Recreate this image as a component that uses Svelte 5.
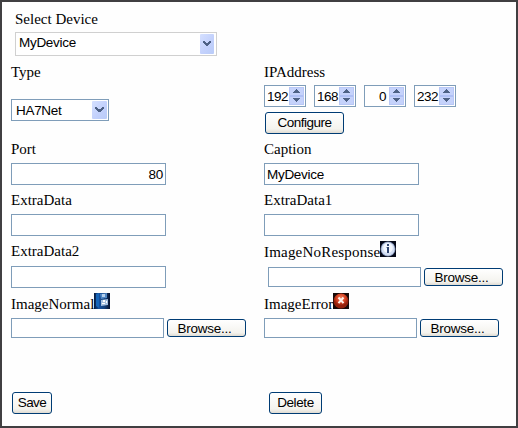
<script>
  let ip = $state(['192', '168', '0', '232']);
</script>

{#snippet arrow()}
  <span class="drop"><svg width="14" height="100%" viewBox="0 0 14 18" preserveAspectRatio="none"><defs><linearGradient id="dg" x2="1" y2="1"><stop stop-color="#d5e0ff"/><stop offset=".55" stop-color="#c3d1fc"/><stop offset="1" stop-color="#b9cbf8"/></linearGradient></defs><rect width="14" height="18" rx="1" fill="url(#dg)"/><path d="M3 6h2v1h1v1h2V7h1V6h2v2h-1v1H9v1H8v1H6v-1H5V9H4V8H3z" fill="#4d6185" shape-rendering="crispEdges"/></svg></span>
{/snippet}

{#snippet file(shift)}
  <div class="file" class:shift><div class="box"></div><button>Browse...</button></div>
{/snippet}

<main>
  <section class="device">
    <div class="label">Select Device</div>
    <div class="select wide"><span>MyDevice</span>{@render arrow()}</div>
  </section>
  <div class="columns">
    <section class="left">
      <div class="label type">Type</div>
      <div class="select"><span>HA7Net</span>{@render arrow()}</div>
      <div class="label port">Port</div>
      <div class="input number">80</div>
      <div class="label">ExtraData</div>
      <div class="input"></div>
      <div class="label">ExtraData2</div>
      <div class="input extra"></div>
      <div class="label pic normal"><span>ImageNormal</span><svg width="16" height="16" viewBox="0 0 16 16"><defs><linearGradient id="ng"><stop stop-color="#071a3b"/><stop offset=".3" stop-color="#1551a0"/><stop offset=".65" stop-color="#12417e"/><stop offset="1" stop-color="#06112d"/></linearGradient></defs><rect width="16" height="16" fill="url(#ng)"/><path d="M2 1l3-1v15l-3-2z" fill="#1765b7"/><path d="M6 1l7-1v5l-6 1z" fill="#5288c4"/><path d="M8 1h3v3H8z" fill="#b5d0ee"/><path d="M7 7l7-1v6l-7 1z" fill="#a3bfdf"/><path d="M9 7h2v2H9zm3 1h1v2h-1zM8 10h3v1H8z" fill="#fff"/><path d="M6 6h2v1H6zm4-1h2v1h-2z" fill="#234e86"/></svg></div>
      {@render file(false)}
      <button class="save">Save</button>
    </section>
    <section class="right">
      <div class="label type">IPAddress</div>
      <div class="ips">
        {#each ip as part}
          <div class="spin"><span>{part}</span><svg width="15" height="18" viewBox="0 0 15 18" shape-rendering="crispEdges"><path d="M0 0h15v18H0z" fill="#c5d2fb"/><path d="M0 8h15v2H0z" fill="#afc0f5"/><path d="M.5.5h14v17H.5z" fill="none" stroke="#b8c7f6"/><path d="M7 2h1v1h1v1h1v1h1v1H4V5h1V4h1V3h1zM4 11h7v1h-1v1H9v1H8v1H7v-1H6v-1H5v-1H4z" fill="#4d6185"/></svg></div>
        {/each}
      </div>
      <button class="configure">Configure</button>
      <div class="label caption">Caption</div>
      <div class="input">MyDevice</div>
      <div class="label">ExtraData1</div>
      <div class="input"></div>
      <div class="label pic response"><span>ImageNoResponse</span><svg width="16" height="16" viewBox="0 0 16 16"><rect width="16" height="16" fill="#050817"/><circle cx="8" cy="8" r="7.5" fill="#7889ad"/><circle cx="8" cy="8" r="6.7" fill="#d3def3"/><circle cx="8" cy="7" r="4.8" fill="#f3f7ff"/><path d="M7 3h2v2H7zM6.6 6H9v6H7V7h-.4z" fill="#304571"/></svg></div>
      {@render file(true)}
      <div class="label pic error"><span>ImageError</span><svg width="16" height="16" viewBox="0 0 16 16"><defs><radialGradient id="eg" cy=".3"><stop stop-color="#ef8060"/><stop offset=".6" stop-color="#d54222"/><stop offset="1" stop-color="#94200b"/></radialGradient></defs><rect width="16" height="16" fill="#170908"/><circle cx="8" cy="8" r="7.5" fill="url(#eg)"/><path d="M5.5 4.5l5 5.6M10.5 4.5l-5 5.6" stroke="#fff0e9" stroke-width="2.1"/></svg></div>
      {@render file(false)}
      <button class="delete">Delete</button>
    </section>
  </div>
</main>

<style>
  main { box-sizing: border-box; width: 518px; height: 428px; border: 2px solid #403f41; background: #fefefe; color: #000; overflow: hidden; font: 13.5px/18px "Liberation Sans", Arial, sans-serif; letter-spacing: -.3px; }
  section { display: flex; flex-direction: column; align-items: flex-start; }
  .device { height: 62px; padding: 8px 0 0 13px; box-sizing: border-box; }
  .label { height: 22px; font: 15px/16px "Liberation Serif", "Times New Roman", serif; letter-spacing: 0; white-space: nowrap; }
  .device .label { line-height: 18px; }
  .columns { display: flex; padding-left: 9px; }
  .left { width: 253px; }
  .right { width: 245px; }
  .select, .input, .box, .spin, button { box-sizing: border-box; border: 1px solid #7f9db9; background: #fff; }
  .select { width: 98px; height: 22px; display: flex; justify-content: space-between; padding: 1px 1px 1px 4px; line-height: 20px; }
  .wide { width: 202px; height: 24px; border-color: #d0d0d0; padding-left: 3px; line-height: 18px; }
  .drop { display: block; width: 15px; }
  .drop svg { display: block; width: 14px; height: 100%; }
  .select:not(.wide) .drop svg { width: 15px; }
  .type { height: 21px; }
  .left .type { height: 35px; }
  .input { width: 155px; height: 22px; padding: 1px 2px; line-height: 20px; margin-bottom: 7px; }
  .number { text-align: right; }
  .port { margin-top: 20px; }
  .caption { margin-top: 7px; }
  .extra { margin-top: 1px; margin-bottom: 5px; }
  .ips { display: flex; gap: 8px; height: 27px; letter-spacing: -.5px; }
  .spin { width: 42px; height: 22px; display: flex; align-items: center; justify-content: flex-end; padding-right: 1px; gap: 1px; }
  .spin span { line-height: 16px; padding-top: 2px; }
  .spin:nth-child(3) { gap: 3px; }
  button { height: 22px; padding: 0; border-color: #003c74; border-radius: 3px; background: linear-gradient(#fff, #f4f3ee 80%, #dfdbd2); color: #000; font: 13.5px/18px "Liberation Sans", Arial, sans-serif; letter-spacing: -.38px; text-align: center; }
  .configure { width: 79px; margin-left: 1px; letter-spacing: -.5px; }
  .file { display: flex; gap: 3px; align-items: center; height: 20px; }
  .box { width: 153px; height: 20px; }
  .file button { width: 79px; height: 18px; padding: 0 4px 0 0; line-height: 15px; letter-spacing: -.25px; }
  .shift { margin-left: 4px; }
  .pic { display: flex; height: 25px; }
  .pic span { line-height: 22px; }
  .response { height: 26px; margin-top: -2px; }
  .response span { letter-spacing: .2px; }
  .error { margin-top: 6px; }
  .save { width: 40px; margin: 54px 0 0 1px; letter-spacing: -.6px; }
  .delete { width: 53px; margin: 54px 0 0 5px; }
</style>
